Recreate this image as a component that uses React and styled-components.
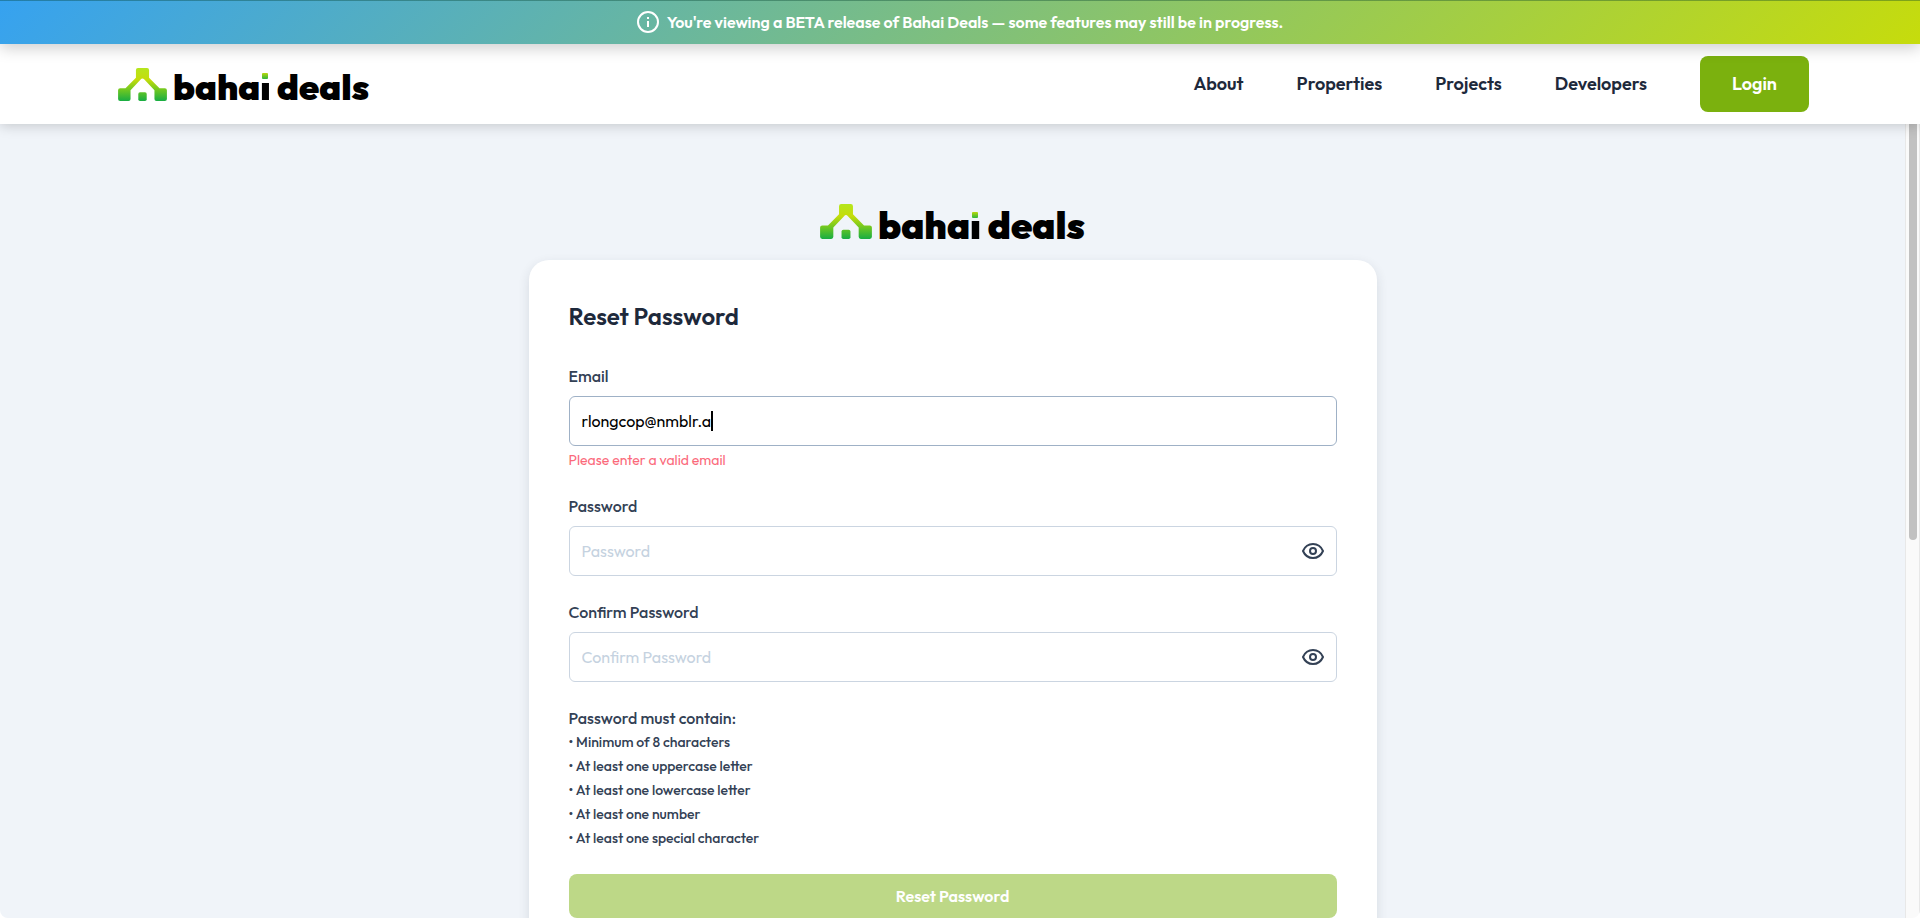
import React, { useId, useState } from "react";
import styled, { createGlobalStyle } from "styled-components";

const GlobalStyle = createGlobalStyle`
  *, *::before, *::after { box-sizing: border-box; }
  body {
    margin: 0;
    background: #ffffff;
    font-family: Outfit, Lato, "Liberation Sans", sans-serif;
    font-size: 16px;
    line-height: 24px;
    color: #334155;
  }
  button, input { font: inherit; }
`;

const Shell = styled.div`
  display: flex;
  flex-direction: column;
  height: 100vh;
  overflow: hidden;
  border-radius: 0 0 8px 8px;
`;

const Banner = styled.div`
  display: flex;
  flex: none;
  align-items: center;
  justify-content: center;
  gap: 8px;
  height: 44px;
  background: linear-gradient(135deg, #36a2f0 0%, #c6dc0c 100%);
  color: #ffffff;
  font-weight: 600;
  position: relative;
  z-index: 2;
  box-shadow: inset 0 1px 0 rgba(0, 60, 40, 0.35), 0 4px 16px rgba(0, 0, 0, 0.2);
`;

const Header = styled.header`
  display: flex;
  flex: none;
  align-items: center;
  justify-content: space-between;
  height: 80px;
  padding: 0 111px 0 118px;
  background: #ffffff;
  position: relative;
  z-index: 1;
  box-shadow: 0 2px 12px rgba(0, 0, 0, 0.18);
`;

const Nav = styled.nav`
  display: flex;
  align-items: center;
  gap: 53px;
`;

const NavLink = styled.a`
  color: #1e293b;
  font-size: 18px;
  font-weight: 600;
  text-decoration: none;
`;

const LoginButton = styled.button`
  height: 56px;
  padding: 0 32px;
  border: 0;
  border-radius: 8px;
  background: #7bb10e;
  color: #ffffff;
  font-size: 18px;
  font-weight: 600;
`;

const LogoLink = styled.a`
  display: flex;
  align-items: flex-end;
  gap: 6px;
  color: #000000;
  text-decoration: none;

  svg {
    display: block;
    width: ${(p) => (p.$large ? 52 : 49)}px;
    height: ${(p) => (p.$large ? 35 : 33)}px;
  }
`;

const Wordmark = styled.span`
  font-weight: 900;
  font-size: ${(p) => (p.$large ? 38 : 36)}px;
  line-height: 28px;
  white-space: nowrap;
`;

const DottedLetter = styled.span`
  position: relative;
  background: linear-gradient(transparent 42%, #000000 42%);
  background-clip: text;
  -webkit-background-clip: text;
  color: transparent;

  &::before {
    content: "";
    position: absolute;
    top: 22%;
    left: 15%;
    width: 6px;
    height: 6px;
    border-radius: 1px;
    background: linear-gradient(#b8d80c, #2fb53c);
  }
`;

const Viewport = styled.div`
  display: flex;
  flex: 1;
  min-height: 0;
`;

const Main = styled.main`
  display: flex;
  flex: 1;
  flex-direction: column;
  align-items: center;
  gap: 21px;
  padding: 80px 24px;
  overflow: hidden;
  background: #f0f4f9;
`;

const ScrollRail = styled.div`
  display: flex;
  justify-content: center;
  width: 15px;
  border: solid #e8e8e8;
  border-width: 0 1px;
  background: #fafafa;
`;

const ScrollThumb = styled.div`
  width: 8px;
  height: 52.4%;
  border-radius: 0 0 4px 4px;
  background: #c1c1c1;
`;

const Card = styled.form`
  display: flex;
  flex: none;
  flex-direction: column;
  gap: 24px;
  width: 100%;
  max-width: 848px;
  padding: 40px;
  border-radius: 20px;
  background: #ffffff;
  box-shadow: 0 4px 12px rgba(30, 41, 59, 0.12);
`;

const Title = styled.h1`
  margin: 0 0 8px;
  color: #1e293b;
  font-size: 24px;
  font-weight: 600;
  line-height: 32px;
`;

const FieldGroup = styled.div`
  display: flex;
  flex-direction: column;
`;

const Label = styled.label`
  margin-bottom: 8px;
  font-weight: 500;
`;

const Control = styled.div`
  position: relative;
  display: flex;
  align-items: center;
  height: 50px;
  padding: 0 12px;
  border: 1px solid ${(p) => (p.$active ? "#9fb1c6" : "#cbd5e1")};
  border-radius: 6px;
`;

const TextInput = styled.input`
  flex: 1;
  min-width: 0;
  padding: 0;
  border: 0;
  outline: 0;
  background: transparent;
  color: #000000;

  &::placeholder {
    color: #c5d2e0;
    opacity: 1;
  }
`;

const Caret = styled.span`
  position: absolute;
  left: 141px;
  width: 2px;
  height: 20px;
  background: #000000;
`;

const EyeButton = styled.button`
  display: flex;
  padding: 0;
  border: 0;
  background: transparent;
  color: #334155;
`;

const ErrorText = styled.p`
  margin: 4px 0 0;
  color: #fb6a7b;
  font-size: 14px;
  line-height: 20px;
`;

const Rules = styled.div`
  font-weight: 500;
`;

const RuleList = styled.ul`
  margin: 0;
  padding: 0;
  list-style: none;
  font-size: 14px;

  li::before { content: "• "; }
`;

const SubmitButton = styled.button`
  height: 44px;
  border: 0;
  border-radius: 8px;
  background: #bdd887;
  color: #ffffff;
  font-weight: 600;
`;

function HouseMark() {
  const id = useId();
  return (
    <svg viewBox="0 0 145 98" aria-hidden="true">
      <defs>
        <linearGradient id={id} gradientUnits="userSpaceOnUse" x1="0" y1="0" x2="0" y2="98">
          <stop offset="0" stopColor="#b5e61d" />
          <stop offset="0.35" stopColor="#c5dc0a" />
          <stop offset="0.65" stopColor="#72c820" />
          <stop offset="1" stopColor="#18ad43" />
        </linearGradient>
      </defs>
      <g fill={`url(#${id})`}>
        <path d="M59 0H86Q92 0 92 6V29L123 60H139Q145 60 145 66V92Q145 98 139 98H114Q108 98 108 92V66L78 34Q72 28 67 34L37 66V92Q37 98 31 98H6Q0 98 0 92V66Q0 60 6 60H22L53 29V6Q53 0 59 0Z" />
        <rect x="60" y="72" width="25" height="26" rx="5" />
      </g>
    </svg>
  );
}

function Logo({ large }) {
  return (
    <LogoLink href="#home" $large={large}>
      <HouseMark />
      <Wordmark $large={large}>
        baha<DottedLetter>i</DottedLetter> deals
      </Wordmark>
    </LogoLink>
  );
}

function InfoIcon() {
  return (
    <svg width="22" height="22" viewBox="0 0 22 22" fill="none" stroke="#ffffff" strokeWidth="2" aria-hidden="true">
      <circle cx="11" cy="11" r="10" />
      <path d="M11 10V16M11 6V8" />
    </svg>
  );
}

function EyeIcon() {
  return (
    <svg width="22" height="16" viewBox="0 0 22 16" fill="none" stroke="currentColor" strokeWidth="2" aria-hidden="true">
      <path d="M1 8C3 3.400 6.600 1 11 1S19 3.400 21 8C19 12.600 15.400 15 11 15S3 12.600 1 8Z" strokeLinejoin="round" />
      <circle cx="11" cy="8" r="3" />
    </svg>
  );
}

function PasswordField({ id, label }) {
  const [visible, setVisible] = useState(false);
  return (
    <FieldGroup>
      <Label htmlFor={id}>{label}</Label>
      <Control>
        <TextInput id={id} type={visible ? "text" : "password"} placeholder={label} />
        <EyeButton type="button" aria-label={`Show ${label}`} onClick={() => setVisible(!visible)}>
          <EyeIcon />
        </EyeButton>
      </Control>
    </FieldGroup>
  );
}

const links = ["About", "Properties", "Projects", "Developers"];
const rules = [
  "Minimum of 8 characters",
  "At least one uppercase letter",
  "At least one lowercase letter",
  "At least one number",
  "At least one special character",
];

export default function App() {
  const [email, setEmail] = useState("rlongcop@nmblr.a");
  return (
    <Shell>
      <GlobalStyle />
      <Banner>
        <InfoIcon />
        <span>You're viewing a BETA release of Bahai Deals — some features may still be in progress.</span>
      </Banner>
      <Header>
        <Logo />
        <Nav>
          {links.map((name) => (
            <NavLink key={name} href={`#${name.toLowerCase()}`}>{name}</NavLink>
          ))}
          <LoginButton type="button">Login</LoginButton>
        </Nav>
      </Header>
      <Viewport>
        <Main>
          <Logo large />
          <Card onSubmit={(e) => e.preventDefault()}>
            <Title>Reset Password</Title>
            <FieldGroup>
              <Label htmlFor="email">Email</Label>
              <Control $active>
                <TextInput id="email" type="email" value={email} onChange={(e) => setEmail(e.target.value)} aria-describedby="email-error" />
                <Caret />
              </Control>
              <ErrorText id="email-error">Please enter a valid email</ErrorText>
            </FieldGroup>
            <PasswordField id="password" label="Password" />
            <PasswordField id="confirm" label="Confirm Password" />
            <Rules>
              Password must contain:
              <RuleList>
                {rules.map((rule) => (
                  <li key={rule}>{rule}</li>
                ))}
              </RuleList>
            </Rules>
            <SubmitButton type="submit" disabled>Reset Password</SubmitButton>
          </Card>
        </Main>
        <ScrollRail>
          <ScrollThumb />
        </ScrollRail>
      </Viewport>
    </Shell>
  );
}
